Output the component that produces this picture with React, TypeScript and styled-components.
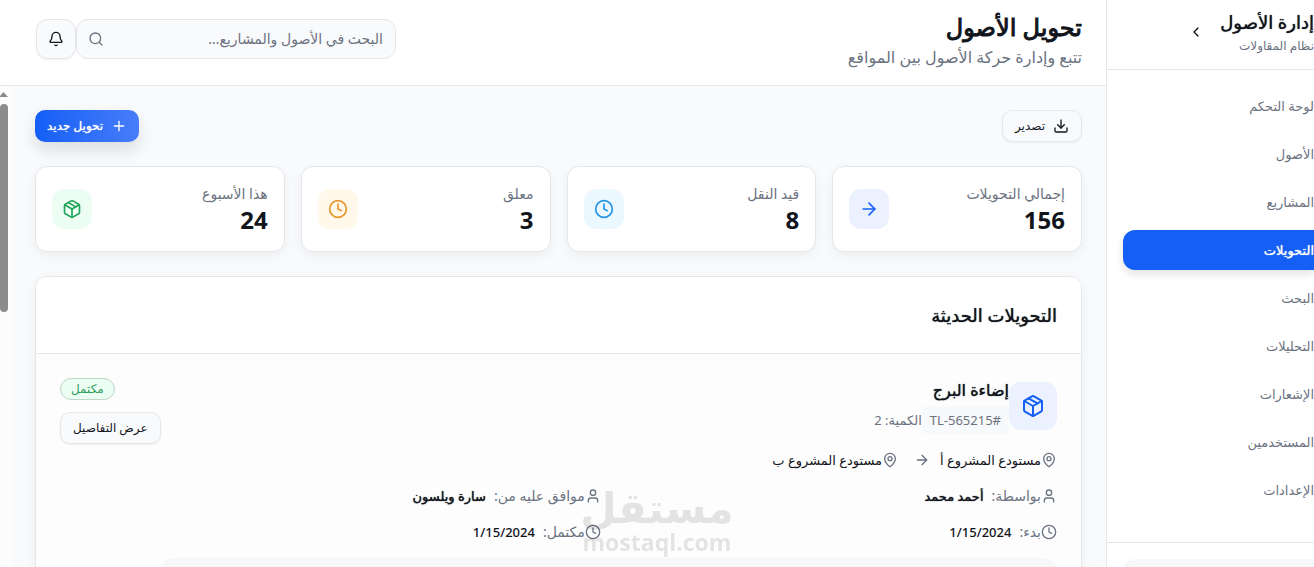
import React from "react";
import styled, { createGlobalStyle, css } from "styled-components";
import {
  ArrowRight,
  Bell,
  ChevronLeft,
  Clock,
  Download,
  MapPin,
  Package,
  Plus,
  Search,
  User,
} from "lucide-react";

const color = {
  ink: "#11141b",
  muted: "#6b7280",
  line: "#e5e7eb",
  page: "#f9fafc",
  soft: "#f5f7f9",
  blue: "#155ff6",
};

// Arabic has only a regular and a bold face here; these give the weight between.
const semiBoldHeading = css`
  font-weight: 400;
  -webkit-text-stroke: 1px currentColor;
`;

const semiBoldText = css`
  font-weight: 500;
  text-shadow: 0 0 1px currentColor;
`;

const GlobalStyle = createGlobalStyle`
  *, *::before, *::after { box-sizing: border-box; }
  body {
    margin: 0;
    background: ${color.page};
    color: ${color.ink};
    font-family: "Noto Sans", "DejaVu Sans", sans-serif;
    font-size: 14px;
    line-height: 20px;
  }
  h1, h2, h3, p, ul, dl, dd, dt { margin: 0; padding: 0; }
  button, input { font: inherit; color: inherit; }
  button { cursor: pointer; }
`;

const Shell = styled.div`
  display: flex;
  height: 100vh;
  overflow: hidden;
`;

const Sidebar = styled.aside`
  flex: 0 0 208px;
  display: flex;
  flex-direction: column;
  overflow: hidden;
  background: #fff;
  border-inline-end: 1px solid ${color.line};
`;

const Brand = styled.div`
  display: flex;
  align-items: center;
  gap: 8px;
  flex: none;
  padding: 8px 0 13px;
  border-bottom: 1px solid ${color.line};
`;

const BrandName = styled.h2`
  ${semiBoldText}
  font-size: 18px;
  line-height: 28px;
  white-space: nowrap;
`;

const BrandNote = styled.p`
  font-size: 12px;
  color: ${color.muted};
`;

const Collapse = styled.button`
  display: flex;
  padding: 8px;
  border: 0;
  background: none;
`;

const Nav = styled.nav`
  flex: none;
  display: flex;
  flex-direction: column;
  gap: 8px;
  padding: 16px 0 32px;
  padding-inline-end: 16px;
`;

const NavLink = styled.a<{ $active?: boolean }>`
  ${(p) => p.$active && semiBoldText}
  padding: 10px 0;
  border-radius: 12px 0 0 12px;
  color: ${(p) => (p.$active ? "#fff" : color.muted)};
  background: ${(p) => (p.$active ? color.blue : "transparent")};
  box-shadow: ${(p) => (p.$active ? "0 4px 8px rgba(17, 20, 27, 0.12)" : "none")};
  font-size: 13px;
  text-decoration: none;
`;

const SidebarFooter = styled.div`
  flex: none;
  padding: 16px 0;
  padding-inline-end: 16px;
  border-top: 1px solid ${color.line};
`;

const Account = styled.div`
  height: 64px;
  border-radius: 12px 0 0 12px;
  background: ${color.soft};
`;

const Main = styled.main`
  flex: 1;
  min-width: 0;
  display: flex;
  flex-direction: column;
`;

const Header = styled.header`
  flex: none;
  display: flex;
  justify-content: space-between;
  align-items: center;
  padding: 9px 24px 16px 36px;
  background: #fff;
  border-bottom: 1px solid ${color.line};
`;

const PageTitle = styled.h1`
  ${semiBoldHeading}
  font-size: 24px;
  line-height: 36px;
`;

const PageNote = styled.p`
  font-size: 16px;
  line-height: 24px;
  color: ${color.muted};
`;

const HeaderTools = styled.div`
  display: flex;
`;

const SearchBox = styled.label`
  display: flex;
  align-items: center;
  width: 320px;
  height: 40px;
  padding: 0 12px 0 11px;
  border: 1px solid ${color.line};
  border-radius: 12px;
  background: ${color.page};
  color: ${color.muted};
`;

const SearchInput = styled.input`
  flex: 1;
  min-width: 0;
  padding: 0;
  border: 0;
  outline: 0;
  background: none;
  font-size: 14px;
  &::placeholder { color: ${color.muted}; opacity: 1; }
`;

const BellButton = styled.button`
  display: grid;
  place-items: center;
  width: 40px;
  height: 40px;
  padding: 0;
  border: 1px solid ${color.line};
  border-radius: 12px;
  background: ${color.page};
  box-shadow: 0 1px 2px rgba(17, 20, 27, 0.06);
`;

const Scroller = styled.div`
  flex: 1;
  min-height: 0;
  display: flex;
`;

const Content = styled.div`
  flex: 1;
  min-width: 0;
  display: flex;
  flex-direction: column;
  gap: 24px;
  padding: 24px;
  overflow: hidden;
`;

const ScrollTrack = styled.div`
  flex: 0 0 11px;
  display: flex;
  flex-direction: column;
  align-items: flex-end;
  gap: 7px;
  padding-top: 6px;
  background: #fcfcfc;
`;

const ScrollArrow = styled.svg`
  flex: none;
  width: 11px;
  height: 5px;
`;

const ScrollThumb = styled.div`
  flex: none;
  width: 8px;
  height: 208px;
  border-radius: 4px;
  background: #8b8c8b;
`;

const Actions = styled.div`
  display: flex;
  justify-content: space-between;
`;

const Button = styled.button<{ $primary?: boolean }>`
  ${(p) => p.$primary && semiBoldText}
  display: flex;
  align-items: center;
  gap: 8px;
  height: 32px;
  padding: 0 12px;
  border: ${(p) => (p.$primary ? "0" : `1px solid ${color.line}`)};
  border-radius: 10px;
  color: ${(p) => (p.$primary ? "#fff" : color.ink)};
  background: ${(p) =>
    p.$primary ? "linear-gradient(90deg, #155ff6, #477df9)" : color.page};
  box-shadow: ${(p) =>
    p.$primary
      ? "0 8px 16px rgba(17, 20, 27, 0.12)"
      : "0 1px 2px rgba(17, 20, 27, 0.06)"};
  font-size: 12px;
  white-space: nowrap;
`;

const Stats = styled.div`
  display: grid;
  grid-template-columns: repeat(4, 1fr);
  gap: 16px;
`;

const StatCard = styled.article`
  display: flex;
  align-items: center;
  justify-content: space-between;
  padding: 16px;
  border: 1px solid ${color.line};
  border-radius: 12px;
  background: #fff;
  box-shadow: 0 4px 12px rgba(17, 20, 27, 0.05);
`;

const StatLabel = styled.p`
  font-size: 14px;
  line-height: 22px;
  color: ${color.muted};
`;

const StatValue = styled.p`
  font-size: 24px;
  font-weight: 700;
  line-height: 30px;
`;

const IconTile = styled.div<{ $size: number; $tint: string; $ink: string }>`
  flex: none;
  display: grid;
  place-items: center;
  width: ${(p) => p.$size}px;
  height: ${(p) => p.$size}px;
  border-radius: 12px;
  color: ${(p) => p.$ink};
  background: ${(p) => p.$tint};
`;

const Panel = styled.section`
  flex: none;
  border: 1px solid ${color.line};
  border-radius: 12px;
  background: #fdfdfd;
  box-shadow: 0 4px 12px rgba(17, 20, 27, 0.05);
  overflow: hidden;
`;

const PanelHeader = styled.div`
  padding: 24px;
  border-bottom: 1px solid ${color.line};
  background: #fff;
`;

const PanelTitle = styled.h2`
  ${semiBoldText}
  font-size: 18px;
  line-height: 28px;
`;

const Transfer = styled.article`
  display: flex;
  padding: 24px;
`;

const TransferBody = styled.div`
  flex: 1;
  min-width: 0;
  display: flex;
  flex-direction: column;
  gap: 16px;
`;

const Asset = styled.div`
  display: flex;
  align-items: center;
`;

const AssetText = styled.div`
  display: flex;
  flex-direction: column;
  gap: 4px;
`;

const AssetName = styled.h3`
  ${semiBoldText}
  font-size: 16px;
  line-height: 24px;
`;

const AssetMeta = styled.div`
  display: flex;
  align-items: center;
  font-size: 13px;
  line-height: 28px;
  color: ${color.muted};
`;

const AssetCode = styled.span`
  padding: 0 8px;
  border-radius: 4px;
  background: #f8f9fa;
`;

const Route = styled.div`
  display: flex;
  align-items: center;
  gap: 10px;
  color: ${color.muted};
`;

const RouteArrow = styled(ArrowRight)`
  margin-inline-end: 6px;
`;

const Place = styled.span`
  display: flex;
  align-items: center;
  font-size: 13px;
`;

const PlaceName = styled.span`
  color: ${color.ink};
`;

const Facts = styled.dl`
  display: grid;
  grid-template-columns: 1fr 1fr;
  gap: 16px;
`;

const Fact = styled.div`
  display: flex;
  align-items: center;
  color: ${color.muted};
  font-size: 14px;
`;

const FactValue = styled.dd<{ $latin?: boolean }>`
  ${(p) => !p.$latin && semiBoldText}
  margin-inline-start: 8px;
  color: ${color.ink};
  font-size: 13px;
  font-weight: 500;
`;

const Remark = styled.div`
  height: 48px;
  border-radius: 12px;
  background: ${color.soft};
`;

const TransferSide = styled.div`
  display: flex;
  flex-direction: column;
  align-items: flex-end;
  gap: 12px;
`;

const Badge = styled.span`
  padding: 0 10px;
  border: 1px solid #bfd6c9;
  border-radius: 11px;
  background: #ecfdf3;
  color: #2c9f5c;
  font-size: 12px;
  font-weight: 500;
`;

const Watermark = styled.div`
  position: fixed;
  inset: auto 0 11px;
  display: flex;
  flex-direction: column;
  align-items: center;
  color: #000;
  opacity: 0.1;
  font-weight: 700;
  pointer-events: none;
`;

const WatermarkName = styled.span`
  font-size: 42px;
  line-height: 42px;
`;

const WatermarkSite = styled.span`
  font-family: "Open Sans", sans-serif;
  font-size: 23px;
  line-height: 28px;
`;

const navItems = [
  "لوحة التحكم",
  "الأصول",
  "المشاريع",
  "التحويلات",
  "البحث",
  "التحليلات",
  "الإشعارات",
  "المستخدمين",
  "الإعدادات",
];

const stats = [
  { label: "إجمالي التحويلات", value: "156", Icon: ArrowRight, tint: "#ebf1ff", ink: "#155ff6" },
  { label: "قيد النقل", value: "8", Icon: Clock, tint: "#ebf8ff", ink: "#2596e8" },
  { label: "معلق", value: "3", Icon: Clock, tint: "#fff8eb", ink: "#e8962e" },
  { label: "هذا الأسبوع", value: "24", Icon: Package, tint: "#ecfdf3", ink: "#23a45a" },
];

const facts = [
  { label: "بواسطة:", value: "أحمد محمد", Icon: User },
  { label: "موافق عليه من:", value: "سارة ويلسون", Icon: User },
  { label: "بدء:", value: "1/15/2024", Icon: Clock, latin: true },
  { label: "مكتمل:", value: "1/15/2024", Icon: Clock, latin: true },
];

export default function App() {
  return (
    <>
      <GlobalStyle />
      <Shell dir="rtl" lang="ar">
        <Sidebar>
          <Brand>
            <div>
              <BrandName>إدارة الأصول</BrandName>
              <BrandNote>نظام المقاولات</BrandNote>
            </div>
            <Collapse aria-label="طي القائمة">
              <ChevronLeft size={16} />
            </Collapse>
          </Brand>
          <Nav>
            {navItems.map((item) => (
              <NavLink key={item} href="#" $active={item === "التحويلات"}>
                {item}
              </NavLink>
            ))}
          </Nav>
          <SidebarFooter>
            <Account />
          </SidebarFooter>
        </Sidebar>

        <Main>
          <Header>
            <div>
              <PageTitle>تحويل الأصول</PageTitle>
              <PageNote>تتبع وإدارة حركة الأصول بين المواقع</PageNote>
            </div>
            <HeaderTools>
              <SearchBox>
                <SearchInput
                  type="search"
                  aria-label="البحث"
                  placeholder="البحث في الأصول والمشاريع..."
                />
                <Search size={16} />
              </SearchBox>
              <BellButton aria-label="الإشعارات">
                <Bell size={16} />
              </BellButton>
            </HeaderTools>
          </Header>

          <Scroller>
            <Content>
              <Actions>
                <Button>
                  <Download size={16} />
                  تصدير
                </Button>
                <Button $primary>
                  <Plus size={16} />
                  تحويل جديد
                </Button>
              </Actions>

              <Stats>
                {stats.map(({ label, value, Icon, tint, ink }) => (
                  <StatCard key={label}>
                    <div>
                      <StatLabel>{label}</StatLabel>
                      <StatValue>{value}</StatValue>
                    </div>
                    <IconTile $size={40} $tint={tint} $ink={ink}>
                      <Icon size={20} />
                    </IconTile>
                  </StatCard>
                ))}
              </Stats>

              <Panel>
                <PanelHeader>
                  <PanelTitle>التحويلات الحديثة</PanelTitle>
                </PanelHeader>
                <Transfer>
                  <TransferBody>
                    <Asset>
                      <IconTile $size={48} $tint="#ebf1ff" $ink={color.blue}>
                        <Package size={24} />
                      </IconTile>
                      <AssetText>
                        <AssetName>إضاءة البرج</AssetName>
                        <AssetMeta>
                          <AssetCode>#TL-565215</AssetCode>
                          <span>الكمية: 2</span>
                        </AssetMeta>
                      </AssetText>
                    </Asset>
                    <Route>
                      <Place>
                        <MapPin size={16} />
                        <PlaceName>مستودع المشروع أ</PlaceName>
                      </Place>
                      <RouteArrow size={16} />
                      <Place>
                        <MapPin size={16} />
                        <PlaceName>مستودع المشروع ب</PlaceName>
                      </Place>
                    </Route>
                    <Facts>
                      {facts.map(({ label, value, Icon, latin }) => (
                        <Fact key={label}>
                          <Icon size={16} />
                          <dt>{label}</dt>
                          <FactValue $latin={latin}>{value}</FactValue>
                        </Fact>
                      ))}
                    </Facts>
                    <Remark />
                  </TransferBody>
                  <TransferSide>
                    <Badge>مكتمل</Badge>
                    <Button>عرض التفاصيل</Button>
                  </TransferSide>
                </Transfer>
              </Panel>
            </Content>
            <ScrollTrack>
              <ScrollArrow viewBox="0 0 11 5" aria-hidden="true">
                <path d="M-1 5 L3.500 0 L8 5 Z" fill="#8b8c8b" />
              </ScrollArrow>
              <ScrollThumb />
            </ScrollTrack>
          </Scroller>
        </Main>
      </Shell>
      <Watermark>
        <WatermarkName lang="ar">مستقل</WatermarkName>
        <WatermarkSite>mostaql.com</WatermarkSite>
      </Watermark>
    </>
  );
}
